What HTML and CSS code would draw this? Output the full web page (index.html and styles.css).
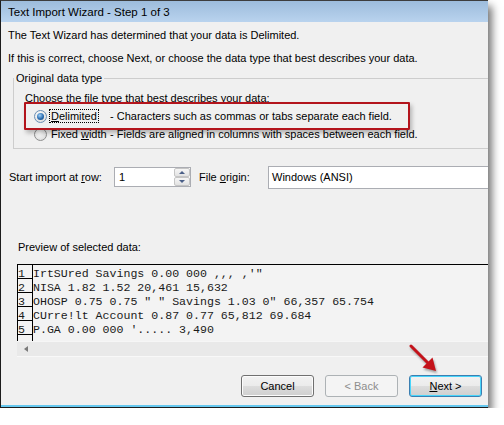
FILE: index.html
```html
<!DOCTYPE html>
<html lang="en">
<head>
  <meta charset="UTF-8" />
  <title>Text Import Wizard - Step 1 of 3</title>
  <link rel="stylesheet" href="styles.css">
</head>
<body>
  <div class="dialog">
    <div class="titlebar">Text Import Wizard - Step 1 of 3</div>

    <div class="content">
      <p class="line">The Text Wizard has determined that your data is Delimited.</p>
      <p class="line second">If this is correct, choose Next, or choose the data type that best describes your data.</p>

      <fieldset class="group">
        <legend>Original data type</legend>
        <div class="group-body">
          <p class="line choose">Choose the file type that best describes your data:</p>
          <div class="option marked">
            <span class="radio checked"></span>
            <span class="opt-name"><span class="focus"><u>D</u>elimited</span></span>
            <span class="opt-desc">- Characters such as commas or tabs separate each field.</span>
          </div>
          <div class="option">
            <span class="radio"></span>
            <span class="opt-name"><span class="nofocus">Fixed <u>w</u>idth</span></span>
            <span class="opt-desc">- Fields are aligned in columns with spaces between each field.</span>
          </div>
        </div>
      </fieldset>

      <div class="import-row">
        <span class="row-label">Start import at <u>r</u>ow:</span>
        <div class="spin">
          <span class="spin-value">1</span>
          <span class="spin-btns">
            <span class="spin-btn up"></span>
            <span class="spin-btn down"></span>
          </span>
        </div>
        <span class="origin-label">File <u>o</u>rigin:</span>
        <div class="select">Windows (ANSI)</div>
      </div>

      <p class="line preview-label">Preview of selected data:</p>
      <div class="preview">
        <div class="preview-body">
          <div class="nums">
            <div class="num">1</div>
            <div class="num">2</div>
            <div class="num">3</div>
            <div class="num">4</div>
            <div class="num">5</div>
          </div>
          <div class="data">
            <div class="data-row">IrtSUred Savings 0.00 000 ,,, ,'"</div>
            <div class="data-row">NISA 1.82 1.52 20,461 15,632</div>
            <div class="data-row">OHOSP 0.75 0.75 " " Savings 1.03 0" 66,357 65.754</div>
            <div class="data-row">CUrre!lt Account 0.87 0.77 65,812 69.684</div>
            <div class="data-row">P.GA 0.00 000 '..... 3,490</div>
          </div>
        </div>
        <div class="hscroll"><span class="arrow-left"></span></div>
      </div>

      <div class="buttons">
        <button class="btn">Cancel</button>
        <button class="btn" disabled>&lt; Back</button>
        <button class="btn default"><u>N</u>ext &gt;</button>
      </div>
    </div>

    <!-- red annotation arrow pointing at Next -->
    <svg class="pointer" width="36" height="36" viewBox="0 0 36 36">
      <line x1="5" y1="5" x2="22" y2="22" stroke="#c4121a" stroke-width="3" stroke-linecap="round" />
      <polygon points="30,30 16.5,26.5 26.5,16.5" fill="#c4121a" />
    </svg>
  </div>
</body>
</html>
```

FILE: styles.css
```css
* {
  box-sizing: border-box;
}

body {
  margin: 0;
  background: #fff;
  font-family: 'Liberation Sans', Arial, sans-serif;
  font-size: 11px;
  color: #000;
}

u {
  text-decoration: underline;
  text-underline-offset: 1px;
}

.dialog {
  position: relative;
  width: 488px;
  height: 408px;
  background: #f0f0f0;
  border-top: 1px solid #3d3d3d;
  border-left: 1px solid #1c1c1c;
  border-bottom: 1px solid #1c1c1c;
  overflow: hidden;
  box-shadow: 4px 6px 8px rgba(0, 0, 0, 0.55);
}

.titlebar {
  height: 21px;
  padding: 2px 0 0 7px;
  line-height: 19px;
  font-size: 11.5px;
  background: linear-gradient(#9dbcdc, #b9d3ee);
}

.content {
  padding: 5px 0 8px 7px;
  border-bottom: 2px solid #66c8ef;
}

.line {
  margin: 0;
  line-height: 16px;
  white-space: nowrap;
}

.second {
  margin-top: 7px;
}

/* group box */

.group {
  margin: 5px -60px 0 5px;
  padding: 0;
  border: 1px solid #cdcdcd;
  min-inline-size: 0;
}

.group legend {
  margin-left: 0;
  padding: 0 2px;
  line-height: 14px;
}

.group-body {
  padding: 5px 0 5px 11px;
}

.option {
  display: flex;
  align-items: center;
  height: 18px;
  white-space: nowrap;
}

.choose + .option {
  margin-top: 1px;
}

.marked {
  position: relative;
}

.marked::after {
  content: "";
  position: absolute;
  left: -1px;
  top: -5px;
  width: 382px;
  height: 24px;
  border: 2px solid #b3141c;
  border-radius: 1px;
  box-shadow: 2px 3px 4px rgba(0, 0, 0, 0.25);
}

.radio {
  width: 13px;
  height: 13px;
  margin-left: 9px;
  border: 1px solid #8e8f8f;
  border-radius: 50%;
  background: radial-gradient(circle at 40% 35%, #ffffff, #e6e6e6 60%, #d4d4d4);
  display: flex;
  align-items: center;
  justify-content: center;
}

.radio.checked {
  border-color: #6b8fb4;
}

.radio.checked::before {
  content: "";
  width: 7px;
  height: 7px;
  border-radius: 50%;
  background: radial-gradient(circle at 40% 35%, #9fd0f7, #2a6cb0 55%, #143f73);
}

.opt-name {
  width: 61px;
  margin-left: 2px;
}

.focus,
.nofocus {
  padding: 0 1px;
  border: 1px dotted #000;
}

.nofocus {
  border-color: transparent;
}

/* import row */

.import-row {
  display: flex;
  align-items: center;
  height: 24px;
  margin-top: 16px;
  margin-right: -60px;
  white-space: nowrap;
}

.row-label {
  width: 106px;
  padding-left: 1px;
}

.spin {
  display: flex;
  width: 77px;
  height: 20px;
  border: 1px solid #abadb3;
  background: #fff;
}

.spin-value {
  flex: 1;
  padding-left: 4px;
  line-height: 18px;
}

.spin-btns {
  display: flex;
  flex-direction: column;
  width: 16px;
}

.spin-btn {
  flex: 1;
  display: flex;
  align-items: center;
  justify-content: center;
  border: 1px solid #c5c5c5;
  border-radius: 2px;
  background: linear-gradient(#f6f6f6, #e2e2e2);
}

.spin-btn::before {
  content: "";
  border-left: 3px solid transparent;
  border-right: 3px solid transparent;
}

.spin-btn.up::before {
  border-bottom: 3px solid #4a5f87;
}

.spin-btn.down::before {
  border-top: 3px solid #4a5f87;
}

.origin-label {
  width: 69px;
  margin-left: 8px;
}

.select {
  flex: 1;
  height: 23px;
  padding-left: 3px;
  line-height: 21px;
  border: 1px solid #abadb3;
  background: #fff;
}

/* preview */

.preview-label {
  margin-top: 50px;
  padding-left: 10px;
}

.preview {
  margin: 9px -60px 0 9px;
  border-top: 1px solid #000;
}

.preview-body {
  display: flex;
  height: 76px;
  border-left: 1px solid #000;
  background: #f3f3f3;
  font-family: 'Liberation Mono', 'Courier New', monospace;
  font-size: 11.6px;
  color: #1a1a1a;
  white-space: nowrap;
}

.nums {
  width: 15px;
  padding-top: 2px;
  border-right: 1px solid #000;
}

.num {
  height: 12px;
  margin-bottom: 2px;
  line-height: 14px;
  border-bottom: 1px solid #000;
}

.data {
  padding-top: 2px;
}

.data-row {
  height: 14px;
  line-height: 14px;
}

.hscroll {
  display: flex;
  align-items: center;
  height: 16px;
  padding-left: 7px;
  background: #e9e9e9;
  border-top: 1px solid #f6f6f6;
  border-bottom: 1px solid #f8f8f8;
}

.arrow-left {
  border-top: 3px solid transparent;
  border-bottom: 3px solid transparent;
  border-right: 4px solid #7a7a7a;
}

/* buttons */

.buttons {
  display: flex;
  justify-content: flex-end;
  gap: 11px;
  margin-top: 18px;
  padding-right: 6px;
}

.btn {
  width: 73px;
  height: 22px;
  padding: 0;
  font-family: 'Liberation Sans', Arial, sans-serif;
  font-size: 11px;
  color: #000;
  border: 1px solid #707070;
  border-radius: 3px;
  background: linear-gradient(#f2f2f2 0%, #ebebeb 50%, #dddddd 50%, #cfcfcf 100%);
  box-shadow: inset 0 0 0 1px #fcfcfc;
}

.btn:disabled {
  color: #8d8d8d;
  border-color: #adb2b5;
  background: #f4f4f4;
  box-shadow: none;
}

.btn.default {
  border-color: #3c7fb1;
  box-shadow: inset 0 0 0 1px #48d5fb;
}

.pointer {
  position: absolute;
  left: 405px;
  top: 340px;
  filter: drop-shadow(1px 2px 1px rgba(0, 0, 0, 0.35));
}
```
